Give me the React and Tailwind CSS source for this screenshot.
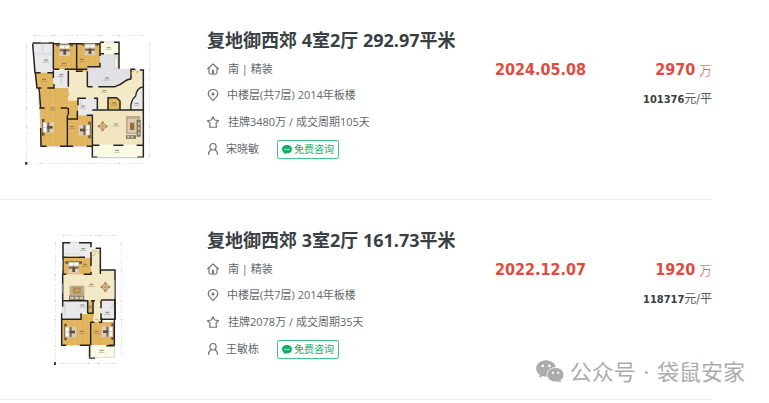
const listings = [
  {
    id: 1,
    title: '复地御西郊 4室2厅 292.97平米',
    direction: '南 | 精装',
    floor: '中楼层(共7层) 2014年板楼',
    deal: '挂牌3480万 / 成交周期105天',
    agent: '宋晓敏',
    date: '2024.05.08',
    price: '2970',
    unit: '101376',
    Plan: FourRoomPlan,
  },
  {
    id: 2,
    title: '复地御西郊 3室2厅 161.73平米',
    direction: '南 | 精装',
    floor: '中楼层(共7层) 2014年板楼',
    deal: '挂牌2078万 / 成交周期35天',
    agent: '王敏栋',
    date: '2022.12.07',
    price: '1920',
    unit: '118717',
    Plan: ThreeRoomPlan,
  },
];

// x/y is the top left corner of the mattress
function Bed({ x, y, turn = 0 }) {
  return (
    <g transform={`rotate(${turn} ${x + 16} ${y + 16})`}>
      <rect x={x - 9} y={y - 2} width="50" height="7" fill="#6b5236" />
      <rect x={x} y={y} width="32" height="34" fill="#d9cdbb" />
      <rect x={x + 3} y={y + 3} width="11" height="7" fill="#fff" />
      <rect x={x + 18} y={y + 3} width="11" height="7" fill="#fff" />
      <rect x={x + 1} y={y + 14} width="30" height="6" fill="#7a6650" />
      <rect x={x + 12} y={y + 14} width="8" height="16" fill="#5f4c3b" />
    </g>
  );
}

function DiningTable({ x, y }) {
  return (
    <g>
      <circle cx={x - 11} cy={y} r="4" fill="#b5894e" />
      <circle cx={x + 11} cy={y} r="4" fill="#b5894e" />
      <circle cx={x} cy={y - 11} r="4" fill="#b5894e" />
      <circle cx={x} cy={y + 11} r="4" fill="#b5894e" />
      <circle cx={x} cy={y} r="9" fill="#d8b98a" stroke="#a98352" strokeWidth="2" />
      <circle cx={x} cy={y} r="3" fill="#8d9a86" />
    </g>
  );
}

function RoomLabels({ spots }) {
  return spots.map(([x, y]) => (
    <g key={`${x}-${y}`} stroke="#6d6255" strokeWidth="3" opacity="0.75">
      <path d={`M${x - 6} ${y}h12`} />
      <path d={`M${x - 9} ${y + 6}h18`} strokeWidth="1.5" />
    </g>
  ));
}

function FourRoomPlan() {
  return (
    <svg viewBox="0 0 420 420" className="h-[140px] w-[140px]" role="img" aria-label="4室2厅户型图">
      <g stroke="#d5d5d5" strokeWidth="1.5" fill="none">
        <path d="M42 22H368" strokeDasharray="26 6 8 6" />
        <path d="M50 406H370" strokeDasharray="26 6 8 6" />
        <path d="M20 50V400" strokeDasharray="26 6 8 6" />
        <path d="M389 45V385" strokeDasharray="26 6 8 6" />
      </g>
      <g stroke="#9a9a9a" strokeWidth="3" fill="none">
        <path d="M42 22h2M100 22h2M170 22h2M240 22h2M298 22h2M366 22h2M60 406h2M140 406h2M215 406h2M298 406h2M368 406h2" />
        <path d="M20 50v2M20 135v2M20 180v2M20 240v2M20 298v2M389 45v2M389 122v2M389 210v2M389 298v2M389 385v2" />
      </g>
      <path d="M15 402h7v8h-7z" fill="#333" />

      <path d="M145 112H200V176H285L333 150V124H368V350H216V275H145V180H57V176H145z" fill="#f4e9c6" />
      <path d="M42 47H100V134H46z" fill="#e9e9eb" />
      <path d="M100 47H170V124H100zM170 47H240V130H170z" fill="#e2b65f" />
      <path d="M46 134H100V180H48zM57 180H145V275H140V355H62z" fill="#e2b65f" />
      <path d="M145 218H175V262H215V354H140V275H145z" fill="#e2b65f" />
      <path d="M264 210H290L300 220V244H264z" fill="#e2b65f" />
      <path d="M102 128H145V180H102zM175 211H232V240L216 262H175z" fill="#e9e9eb" />
      <path d="M240 77H294V122H333V150Q318 155 310 165L285 176H202V116H240z" fill="#e1e1e4" />
      <path d="M366 178Q350 184 346 204Q332 216 334 244H366z" fill="#e9e9eb" />
      <path d="M242 43H295V77H242z" fill="#fafae0" />
      <path d="M217 352H367V388H217z" fill="#fafbe5" />
      <path d="M218 247H366V349H218z" fill="#f1e5c0" />

      <g stroke="#cf9c4a" strokeWidth="1" opacity="0.5">
        <path d="M112 50V122M126 50V122M140 50V122M154 50V122M183 50V128M197 50V128M211 50V128M225 50V128" />
        <path d="M74 182V353M90 182V353M106 182V353M122 182V353M154 270V352M170 270V352M186 270V352M202 270V352" />
      </g>

      <g stroke="#262321" strokeWidth="4.500" fill="none">
        <path d="M38 45H102M100 45V124M38 47L45 134H62M82 134H102M46 134L51 180H64M82 180H102V168" />
        <path d="M100 47H120M145 47H192M224 47H240V84M240 104V116H202M170 45V130H188M202 130V176M100 124H118M134 124H202" />
        <path d="M240 43H252M282 43H297V122M240 77H252M283 77H297" />
        <path d="M100 127V150M145 128V176M57 180L62 240M58 240H74M122 240H143M145 240V262M62 300L63 355H80" />
        <path d="M120 355H160M200 355H217V388H232M142 262V355M142 273H172V248M200 262H217V355M172 211H198M222 211H232V244M174 211V232" />
        <path d="M264 246V209H290L300 219V246M217 246H368M202 176H218M235 176H285Q302 170 310 163Q320 154 333 152V124H346M360 126H370V388M217 352H238M280 352H310M350 352H370M352 388H370" />
        <path d="M368 177Q350 180 347 204Q330 218 333 246" strokeWidth="4" />
      </g>
      <g stroke="#bfc5c9" strokeWidth="2" fill="none">
        <path d="M62 44H86M120 46H145M192 46H224M252 42H282M56 190V232M62 245V300M80 356H120M160 356H200M232 389H352M216 389H368" />
        <path d="M50 78H95M68 78V50M110 146h14v20M288 88v30M182 216v16" />
      </g>
      <path d="M333 140q0-12 14-12q4 0 4 8q0-8 8-8M133 188q14 0 14 14M133 206q14 0 14-10M60 168q12 2 14 12" stroke="#cda150" strokeWidth="2" fill="none" />

      <Bed x={118} y={50} />
      <Bed x={194} y={48} />
      <Bed x={68} y={282} turn={-90} />
      <Bed x={178} y={290} turn={90} />
      <DiningTable x={248} y={295} />
      <g>
        <rect x="318" y="264" width="42" height="54" fill="#bba98d" />
        <rect x="323" y="272" width="28" height="42" fill="#dccbb0" />
        <rect x="330" y="284" width="13" height="22" fill="#987033" />
        <path d="M318 322h30v10h-30zM350 276h12v50h-12z" fill="#7e6d5a" />
        <path d="M322 324h7v5h-7zM333 324h7v5h-7zM354 282h5v10h-5zM354 297h5v10h-5zM354 311h5v10h-5z" fill="#cfc2af" />
      </g>
      <rect x="284" y="88" width="8" height="32" fill="#f5f1dc" stroke="#bdb59a" />
      <RoomLabels
        spots={[[78, 96], [132, 106], [186, 94], [266, 59], [72, 154], [124, 140], [261, 150], [253, 188], [98, 240], [156, 296], [189, 234], [282, 225], [350, 226], [288, 288], [291, 367]]}
      />
    </svg>
  );
}

function ThreeRoomPlan() {
  return (
    <svg viewBox="0 -6 270 420" className="h-[140px] w-[90px]" role="img" aria-label="3室2厅户型图">
      <g stroke="#d5d5d5" strokeWidth="1.5" fill="none">
        <path d="M55 16H208M50 400H208" strokeDasharray="26 6 8 6" />
        <path d="M31 38V400M229 40V380" strokeDasharray="26 6 8 6" />
      </g>
      <path d="M55 16h2M137 16h2M163 16h2M206 16h2M50 400h2M130 400h2M160 400h2M206 400h2M31 38v2M31 82v2M31 132v2M31 212v2M31 268v2M31 346v2M229 40v2M229 120v2M229 210v2M229 268v2M229 346v2" stroke="#9a9a9a" strokeWidth="3" />
      <path d="M27 397h6v8h-6z" fill="#333" />

      <path d="M138 57H164V120H208V211H168V276H145V212H53V133H138z" fill="#f4e9c6" />
      <path d="M54 38H138V81H54z" fill="#ececee" />
      <path d="M54 83H138V133H54z" fill="#e2b65f" />
      <path d="M54 212H128V250H108V267H54zM168 212H208V265H168z" fill="#e9e9eb" />
      <path d="M50 267H108V252H145V276H208V345H50z" fill="#e2b65f" />
      <path d="M128 212H144V250H128z" fill="#e2b65f" />
      <path d="M132 347H208V382H132z" fill="#fafbe5" />
      <g stroke="#cf9c4a" strokeWidth="1" opacity="0.5">
        <path d="M68 85V131M84 85V131M100 85V131M116 85V131M66 270V343M82 270V343M98 270V343M114 255V343M126 255V343M150 278V343M166 278V343M182 278V343M196 278V343" />
      </g>

      <g stroke="#262321" strokeWidth="4.500" fill="none">
        <path d="M54 38H76M102 38H138V52M54 36V133H64M116 133H138V125M54 82H120M138 66V108M152 55H166V132M166 120H210V268" />
        <path d="M53 133V212H128V250M53 212V230M50 250V346H64M50 268H108V250M128 250H144V212M138 212H150M168 210H210V268H168V250M168 212V235" />
        <path d="M137 275V346M137 277H148M162 277H170V265M208 268V346H192M104 346H134V384H150M184 347H210" />
      </g>
      <g stroke="#bfc5c9" strokeWidth="2" fill="none">
        <path d="M76 37H102M52 90V120M52 160V190M64 347H104M133 382H208V346M52 230V250M209 150V205" />
        <path d="M60 220v38M204 218v14h-10M130 384v-34" />
      </g>
      <path d="M140 65q10-7 18 0q6 4 6 12M140 78q9 0 12-10M145 252q0 14-10 14M162 276q0-10-12-8" stroke="#cda150" strokeWidth="2" fill="none" />
      <rect x="65" y="72" width="36" height="7" fill="#f4efcf" stroke="#bdb59a" />

      <Bed x={70} y={96} />
      <Bed x={60} y={290} turn={-90} />
      <Bed x={172} y={289} turn={90} />
      <DiningTable x={181} y={171} />
      <rect x="74" y="167" width="44" height="28" fill="#c0aa87" />
      <rect x="84" y="172" width="23" height="18" fill="#a88a5e" />
      <path d="M72 196h46v14h-46z" fill="#8c7a64" />
      <path d="M76 200h10v7h-10zM90 200h10v7h-10zM104 200h10v7h-10z" fill="#d6cbbb" />
      <rect x="91" y="178" width="12" height="7" fill="#dca84d" />
      <RoomLabels
        spots={[[115, 56], [120, 103], [139, 163], [112, 225], [136, 230], [187, 247], [111, 304], [155, 304], [170, 361]]}
      />
    </svg>
  );
}

function Icon({ children }) {
  return (
    <svg
      viewBox="0 0 24 24"
      className="size-3 shrink-0"
      fill="none"
      stroke="#6f7578"
      strokeWidth="2.400"
      strokeLinejoin="round"
      strokeLinecap="round"
      aria-hidden="true"
    >
      {children}
    </svg>
  );
}

const HomeIcon = () => (
  <Icon>
    <path d="M1.500 11.500L12 2l10.500 9.500M4 10v9q0 3 3 3h10q3 0 3-3v-9" />
    <path d="M12 15v6" strokeWidth="4" />
  </Icon>
);

const PinIcon = () => (
  <Icon>
    <path d="M12 23C7 18 2.500 14.500 2.500 9.500a9.500 8.500 0 0 1 19 0C21.500 14.500 17 18 12 23z" />
    <circle cx="12" cy="10" r="1.800" fill="#6f7578" />
  </Icon>
);

const StarIcon = () => (
  <Icon>
    <path d="M12 1.500l3.400 6.500 7.600 1.200-5 5.300 1 8H5l1-8-5-5.300L8.600 8z" />
  </Icon>
);

const UserIcon = () => (
  <Icon>
    <ellipse cx="12" cy="7.500" rx="6.200" ry="6.500" />
    <path d="M3 23c0-5 2-8 5.500-10M21 23c0-5-2-8-5.500-10" />
  </Icon>
);

const ChatIcon = () => (
  <svg viewBox="0 0 20 18" className="h-[9px] w-[10px] shrink-0" aria-hidden="true">
    <path d="M10 0C4.500 0 0 3.700 0 8.500c0 2.800 1.500 5 3.800 6.600L3.500 18l4-1.400c.8.200 1.600.3 2.500.3 5.500 0 10-3.600 10-8.400S15.500 0 10 0z" fill="#0eae66" />
    <circle cx="6" cy="9" r="1.300" fill="#fff" />
    <circle cx="10" cy="9" r="1.300" fill="#fff" />
    <circle cx="14" cy="9" r="1.300" fill="#fff" />
  </svg>
);

const WechatIcon = () => (
  <svg viewBox="0 0 84 70" className="h-[23px] w-7 shrink-0" aria-hidden="true">
    <path d="M30 1C13 1 0 12 0 26c0 8 4 15 11 19l-2 10 11-6c3 1 7 2 10 2 17 0 30-11 30-25S47 1 30 1z" fill="#ababab" />
    <circle cx="20" cy="18" r="4" fill="#fff" />
    <circle cx="40" cy="18" r="4" fill="#fff" />
    <path d="M59 23c-14 0-26 9-26 22s12 22 26 22c3 0 6 0 8-1l10 5-2-9c6-4 9-10 9-17 0-13-11-22-25-22z" fill="#ababab" stroke="#fff" strokeWidth="2.500" />
    <circle cx="51" cy="39" r="3.500" fill="#fff" />
    <circle cx="67" cy="39" r="3.500" fill="#fff" />
  </svg>
);

const Listing = ({ item }) => {
  const { Plan } = item;
  return (
    <li className="grid grid-cols-[180px_minmax(0,1fr)_217px] border-b border-[#efefef] pt-7 pb-[31px]">
      <div className="flex justify-center">
        <Plan />
      </div>
      <div className="pl-[27px] text-[11px] whitespace-nowrap text-[#62686b]">
        <h2 className="text-lg leading-6 font-bold text-[#394043]">{item.title}</h2>
        <p className="mt-1 flex h-[26px] items-center gap-[9px]">
          <HomeIcon />
          {item.direction}
        </p>
        <p className="flex h-[26px] items-center gap-2">
          <PinIcon />
          {item.floor}
        </p>
        <p className="flex h-7 items-center gap-[9px]">
          <StarIcon />
          {item.deal}
        </p>
        <div className="flex h-[26px] items-center">
          <UserIcon />
          <span className="ml-[7px] w-[51px]">{item.agent}</span>
          <button
            type="button"
            className="flex h-[19px] items-center gap-[2px] rounded-[2px] border border-[#43c486] px-1 text-[10px] text-[#10ad65]"
          >
            <ChatIcon />
            免费咨询
          </button>
        </div>
      </div>
      <div className="flex justify-between pt-[30px] font-['DejaVu_Sans_Condensed','Noto_Sans_CJK_SC',sans-serif] whitespace-nowrap">
        <p className="text-base leading-6 font-bold text-[#e04b3d]">{item.date}</p>
        <div className="text-right">
          <p className="text-[13px] leading-6 text-[#e04b3d]">
            <span className="text-base leading-6 font-bold">{item.price}</span>{' '}
            <span className="font-light">万</span>
          </p>
          <p className="mt-1 text-xs leading-6 text-[#53585a]">
            <span className="text-[11px] font-bold text-[#394043]">{item.unit}</span>
            元/平
          </p>
        </div>
      </div>
    </li>
  );
};

export default function App() {
  return (
    <main className="relative bg-white pb-[3px] font-['Open_Sans','Noto_Sans_CJK_SC',sans-serif]">
      <ul className="mr-[57px]">
        {listings.map((item) => (
          <Listing key={item.id} item={item} />
        ))}
      </ul>
      <div className="absolute right-6 bottom-4 flex items-center gap-[6px] text-[22px] leading-8 whitespace-nowrap text-[#acacac]">
        <WechatIcon />
        <span>
          公众号<span className="px-[2px]"> · </span>袋鼠安家
        </span>
      </div>
    </main>
  );
}
